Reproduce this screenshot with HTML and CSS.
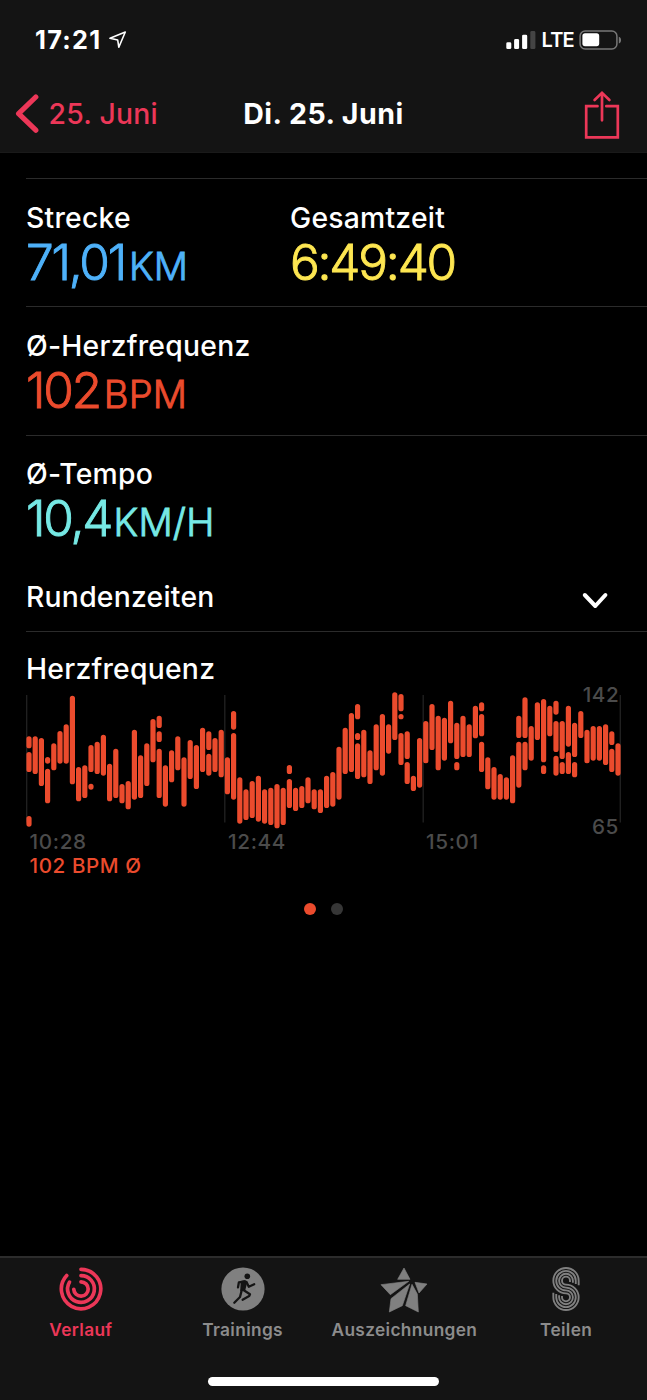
FILE: index.html
```html
<!DOCTYPE html>
<html lang="de">
<head>
<meta charset="utf-8">
<title>Di. 25. Juni</title>
<link rel="stylesheet" href="styles.css">
</head>
<body>
<div class="phone">
  <header class="top">
    <div class="status">
      <span class="clock">17:21</span>
      <svg class="location" width="20" height="20" viewBox="0 0 20 20"><path d="M2 8.3L17.3 2L10.8 17.2L9.7 10Z"/></svg>
      <svg class="signal" width="31" height="20" viewBox="0 0 31 20">
        <rect x="0.3" y="12.3" width="5" height="6.8" rx="1.4"/>
        <rect x="8.1" y="9" width="5" height="10.1" rx="1.4"/>
        <rect x="16.1" y="4.7" width="5.1" height="14.4" rx="1.4"/>
        <rect class="signal-off" x="24.3" y="1" width="5.1" height="18.1" rx="1.4"/>
      </svg>
      <span class="carrier">LTE</span>
      <svg class="battery" width="43" height="21" viewBox="0 0 43 21">
        <rect class="battery-shell" x="1.1" y="1" width="36.8" height="18" rx="5"/>
        <rect class="battery-level" x="3.4" y="3.3" width="16.8" height="12.9" rx="2.6"/>
        <path class="battery-tip" d="M39.8 6.7C42.8 7.8 42.8 12.4 39.8 13.5Z"/>
      </svg>
    </div>
    <nav class="navbar">
      <a class="back"><svg width="26" height="40" viewBox="0 0 26 40"><path d="M21.8 3L4.6 19.6L21.8 36.2"/></svg><span>25. Juni</span></a>
      <h1 class="title">Di. 25. Juni</h1>
      <svg class="share" width="38" height="50" viewBox="0 0 38 50"><path d="M14.5 16.2H3.2V47.4H34.8V16.2H23.3M19 30.3V3M11.6 10L19 2.8L26.4 10"/></svg>
    </nav>
  </header>

  <main class="content">
    <section class="metrics">
      <div class="row distance">
        <div class="metric"><div class="label">Strecke</div><div class="value blue">71,01<span class="unit">KM</span></div></div>
        <div class="metric"><div class="label">Gesamtzeit</div><div class="value yellow">6:49:40</div></div>
      </div>
      <div class="row rate">
        <div class="metric"><div class="label">Ø-Herzfrequenz</div><div class="value orange">102<span class="unit">BPM</span></div></div>
      </div>
      <div class="row pace">
        <div class="metric"><div class="label">Ø-Tempo</div><div class="value teal">10,4<span class="unit speed">KM/H</span></div></div>
      </div>
    </section>
    <div class="laps">
      <div class="label">Rundenzeiten</div>
      <svg class="expand" width="28" height="20" viewBox="0 0 28 20"><path d="M3.8 4L14.3 15L24.4 4"/></svg>
    </div>
    <section class="heart">
      <div class="label">Herzfrequenz</div>
      <svg class="chart" width="647" height="200" viewBox="0 680 647 200">
        <path class="grid" d="M26.7 695V822.5M224.8 695V822.5M423.2 695V822.5M620.3 695V822.5"/>
        <path class="beats" id="beats"/>
        <text class="tick" x="29.5" y="849">10:28</text>
        <text class="tick" x="228" y="849">12:44</text>
        <text class="tick" x="426" y="849">15:01</text>
        <text class="tick end" x="619.5" y="702">142</text>
        <text class="tick end" x="619" y="833.5">65</text>
        <text class="average" x="29.5" y="872.7">102 BPM Ø</text>
      </svg>
    </section>
    <div class="pager"><i class="dot active"></i><i class="dot"></i></div>
  </main>

  <footer class="tabs">
    <a class="tab active">
      <svg width="48" height="48" viewBox="-24 -24 48 48"><g class="rings"><path d="M0 -19.7A19.7 19.7 0 1 1 -14.3 -13.5"/><path d="M0 -13.4A13.4 13.4 0 1 1 -11.5 -6.9"/><path d="M0 -7.2A7.2 7.2 0 1 1 -7.2 .3"/></g></svg>
      <span>Verlauf</span>
    </a>
    <a class="tab">
      <svg width="48" height="48" viewBox="-24 -24 48 48">
        <circle r="21.6"/>
        <circle class="dark" cx="4.3" cy="-12.7" r="2.8"/>
        <path class="dark" d="M-2.2 -8L2.5 -8.7L4.3 -7L2.2 1.5L-2.8 2.2Z"/>
        <g class="limbs"><path d="M1.5 -7.6L-4.1 -6.7L-5 -1.6"/><path d="M3.5 -7L5.8 -2.3L11.2 -4.8"/><path d="M-1.2 1L-3 8L-8.7 13.8"/><path d="M0 .8L7 5.2L6.2 7L-.4 10.7"/></g>
      </svg>
      <span>Trainings</span>
    </a>
    <a class="tab">
      <svg class="star" width="48" height="48" viewBox="181 46 144 144"><path d="M253 55L271 89H234ZM184 105L267 95L212 135ZM270 103L248 168L209 187L214 147ZM277 104L293 133L296 187L258 168ZM286 98L322 103L298 130Z"/></svg>
      <span>Auszeichnungen</span>
    </a>
    <a class="tab">
      <svg width="48" height="48" viewBox="665 46 144 144"><g class="strands">
        <path d="M775 107V93A38 38 0 1 0 737 131A12 12 0 1 1 725 143V139"/>
        <path d="M766.3 103V93A29.3 29.3 0 1 0 737 122.3A20.7 20.7 0 1 1 716.3 143V137"/>
        <path d="M757.7 99V93A20.7 20.7 0 1 0 737 113.7A29.3 29.3 0 1 1 707.7 143V133"/>
        <path d="M749 97V93A12 12 0 1 0 737 105A38 38 0 1 1 699 143V129"/>
      </g></svg>
      <span>Teilen</span>
    </a>
    <div class="home"></div>
  </footer>
</div>
<script src="chart.js"></script>
</body>
</html>
```

FILE: styles.css
```css
body { margin: 0; background: #000; color: #fff; font-family: Inter, "Liberation Sans", sans-serif; }
.phone { width: 647px; height: 1400px; display: flex; flex-direction: column; overflow: hidden; }
svg { display: block; flex: none; }

.top { height: 153px; background: #141414; box-sizing: border-box; border-bottom: 1px solid #1a1a1a; }
.status { display: flex; height: 80px; box-sizing: border-box; padding: 30px 25px 0 35px; align-items: flex-start; }
.clock { font-size: 25.3px; line-height: 20px; font-weight: 700; width: 73px; letter-spacing: 1.3px; white-space: nowrap; }
.location { fill: none; stroke: #fff; stroke-width: 1.6; stroke-linejoin: round; margin-right: auto; }
.signal { fill: #fff; }
.signal-off { fill: #444; }
.carrier { font-size: 20px; line-height: 21px; font-weight: 600; width: 37.5px; margin-left: 4.5px; letter-spacing: -.8px; white-space: nowrap; }
.battery-shell { fill: none; stroke: #777; stroke-width: 1.5; }
.battery-level { fill: #fff; }
.battery-tip { fill: #777; }
.navbar { display: grid; grid-template-columns: 220px 1fr 220px; height: 68px; align-items: center; }
.back { display: flex; align-items: center; gap: 8.5px; padding-left: 14px; color: #ec3758; font-size: 28.3px; font-weight: 450; letter-spacing: .25px; }
.back svg { fill: none; stroke: #ec3758; stroke-width: 5.2; stroke-linecap: round; stroke-linejoin: round; }
.title { margin: 0; text-align: center; font-size: 28.5px; line-height: 34px; font-weight: 750; letter-spacing: .5px; white-space: nowrap; }
.share { justify-self: end; margin: 1px 26px 0 0; fill: none; stroke: #ec3758; stroke-width: 2.7; stroke-linecap: round; }

.content { flex: 1; padding-top: 25px; }
.row { display: flex; margin-left: 26px; box-sizing: border-box; border-top: 1px solid #2b2b2b; }
.distance { height: 128px; padding-top: 22px; }
.rate { height: 129px; padding-top: 22px; }
.pace { height: 124px; padding-top: 21px; }
.metric { width: 264px; }
.label { font-size: 28.3px; line-height: 34px; font-weight: 540; letter-spacing: .25px; white-space: nowrap; }
.value { font-size: 49.5px; line-height: 50px; font-weight: 300; margin-top: 2px; white-space: nowrap; letter-spacing: -2.2px; -webkit-text-stroke: .9px currentColor; stroke-linejoin: round; }
.unit { font-size: 38px; letter-spacing: .2px; margin-left: 4px; }
.speed { margin-left: 2.5px; }
.blue { color: #4eb1f9; }
.yellow { color: #fde651; }
.orange { color: #eb4b2d; }
.teal { color: #76e9e5; }
.laps { display: flex; justify-content: space-between; margin-left: 26px; height: 73px; box-sizing: border-box; border-bottom: 1px solid #2b2b2b; padding: 21px 38px 0 0; }
.expand { margin-top: 11px; fill: none; stroke: #fff; stroke-width: 4; stroke-linecap: round; stroke-linejoin: round; }
.heart { padding-top: 20px; }
.heart .label { padding-left: 26px; height: 28px; }
.grid { fill: none; stroke: #222; stroke-width: 1.3; }
.beats { fill: none; stroke: #eb4b2d; stroke-width: 5.2; stroke-linecap: round; }
.tick { fill: #4b4b4b; font-size: 20.7px; font-weight: 530; letter-spacing: .65px; }
.end { text-anchor: end; }
.average { fill: #eb4b2d; font-size: 20.6px; font-weight: 530; letter-spacing: .6px; }
.pager { display: flex; justify-content: center; gap: 15.5px; padding-top: 23px; }
.dot { width: 12px; height: 12px; border-radius: 50%; background: #363636; }
.dot.active { background: #eb4b2d; }

.tabs { display: grid; grid-template-columns: repeat(4, 1fr); grid-template-rows: 1fr auto; height: 144px; box-sizing: border-box; background: #141414; border-top: 2px solid #2c2c2c; padding-top: 7px; }
.tab { display: flex; flex-direction: column; align-items: center; color: #8c8c8c; font-size: 17.3px; font-weight: 640; line-height: 22px; letter-spacing: .35px; }
.tab svg { fill: #808080; }
.tab span { margin-top: 6px; }
.tab.active { color: #ec3758; }
.tab .rings { fill: none; stroke: #ec3758; stroke-width: 3.7; stroke-linecap: round; }
.dark { fill: #141414; }
.limbs { fill: none; stroke: #141414; stroke-width: 2.3; stroke-linecap: round; stroke-linejoin: round; }
.star { stroke: #808080; stroke-width: 2; stroke-linejoin: round; }
.strands { fill: none; stroke: #808080; stroke-width: 5.6; }
.home { grid-column: 1 / -1; justify-self: center; width: 231px; height: 9px; border-radius: 5px; background: #fff; margin-bottom: 14px; }
```

FILE: chart.js
```js
// One entry per time slot: top-bottom extents of each range, in thirds of a pixel.
const slots = `169-205,216-276,408-440 169-282 174-318 231-251,266-370 190-271 153-251 133-251 47-313
261-364 256-354 195-276,311-329 185-282 164-287 251-364 206-354 312-370 303-388 149-359 226-354 190-318
117-247 107-144,154-186,206-354 256-380 211-307 169-271 232-380 180-297 195-327 143-276 154-210,221-287
174-276 149-292 232-343 93-149,159-359 292-431 328-420 303-414 287-425 328-431 323-435 312-445 323-435
255-282,297-384 323-393 318-384 292-370 328-388 328-399 287-384 276-380 200-359 143-282 99-276
72-118,159-180,190-297 149-292 211-312 133-271 102-287 133-221 37-180 42-94,102-118,159-255
154-237,246-312 287-333 174-323 123-250 72-210 107-271 113-242 62-190 128-237,246-271 107-231 133-231
77-175 67-94,102-169,185-276 232-328 261-359 282-359 292-359 226-370 107-174,185-323 52-174,185-271
138-242 67-180 57-247,256-282 77-169 62-104,123-216,227-287 123-237,246-282 77-200,216-282
128-231,246-292 93-174 149-250 138-242 138-242 133-255 154-195,206-276 190-287`.split(/\s+/);

const cap = 2.6;
const d = slots.map((slot, i) => slot.split(',').map(range => {
  const [top, bottom] = range.split('-').map(v => 680 + v / 3);
  const start = top + cap;
  const end = Math.max(bottom - cap, start + 0.1);
  return `M${(29 + i * 6.2).toFixed(1)} ${start.toFixed(1)}V${end.toFixed(1)}`;
}).join('')).join('');
document.getElementById('beats').setAttribute('d', d);
```
